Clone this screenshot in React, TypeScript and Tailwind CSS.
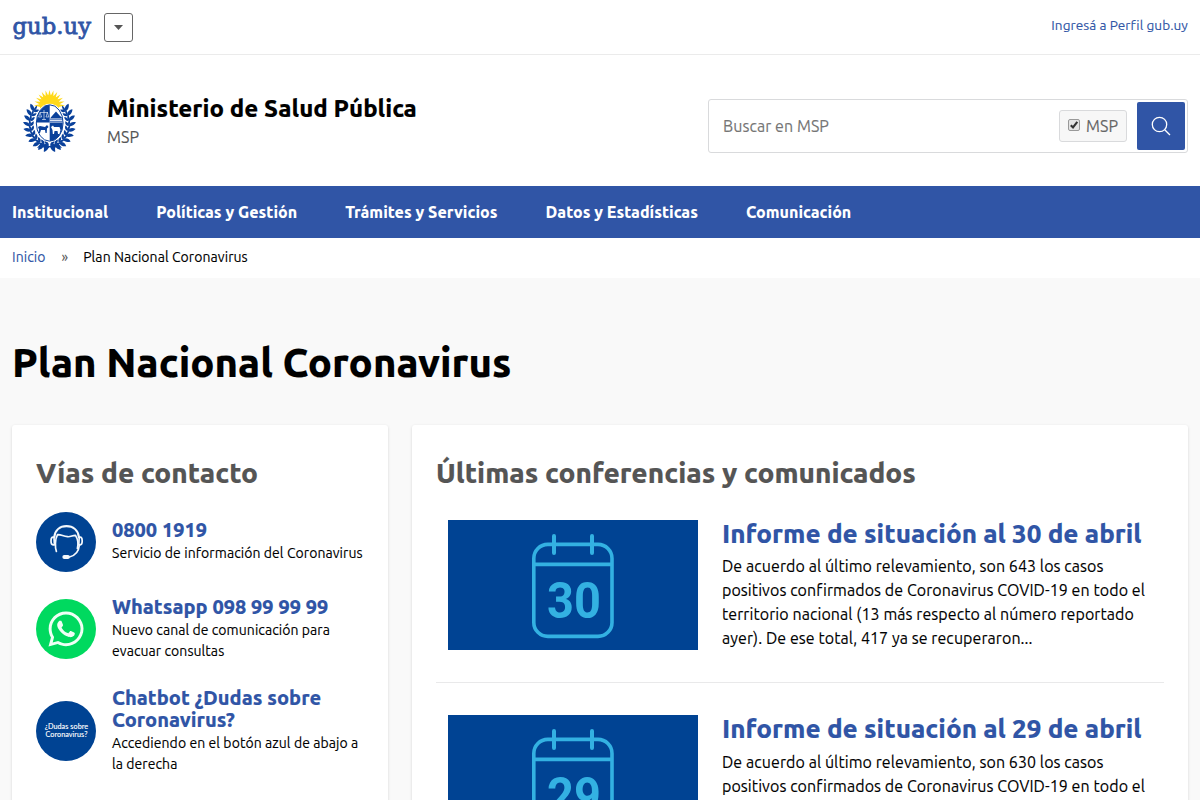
import type { ReactNode } from 'react';
import { FaWhatsapp } from 'react-icons/fa';

const navItems = ['Institucional', 'Políticas y Gestión', 'Trámites y Servicios', 'Datos y Estadísticas', 'Comunicación'];

function GubLogo() {
  return (
    <svg width="80" height="32" viewBox="0 0 80 32" aria-label="gub.uy">
      <text x="0.5" y="22.5" textLength="78.5" lengthAdjust="spacingAndGlyphs" fontFamily="'DejaVu Serif', serif" fontWeight="400" fontSize="22" fill="#3055a6" stroke="#3055a6" strokeWidth=".8">
        gub.uy
      </text>
    </svg>
  );
}

function Emblem() {
  const rays = Array.from({ length: 13 }, (_, i) => -180 + i * 15);
  const leaves = Array.from({ length: 10 }, (_, i) => -34 + i * 13.5);
  const leaf = 'M0 0C2 -2.8 5.4 -2.6 8 0C5.4 1.8 2 2 0 0Z';
  const side = leaves.map((a, i) => {
    const r = (a * Math.PI) / 180;
    const x = 19.5 * Math.cos(r);
    const y = 22 * Math.sin(r);
    return (
      <g key={i} transform={`translate(${x} ${y}) rotate(${a - 90})`}>
        <path d={leaf} transform="rotate(56)" />
        <path d={leaf} transform="rotate(-44) scale(.75)" />
        <path d={leaf} transform="scale(.85 .6)" />
      </g>
    );
  });
  return (
    <svg width="60" height="66" viewBox="0 0 60 66" aria-label="Escudo">
      <g fill="#ffd91a">
        <circle cx="29.5" cy="17" r="10" />
        {rays.map((a) => (
          <path key={a} d="M8 -1.8L15.5 0L8 1.8Z" transform={`translate(29.5 17.5) rotate(${a})`} />
        ))}
      </g>
      <g fill="#0a419b">
        <g transform="translate(29.5 35.5)">
          {side}
          <g transform="scale(-1 1)">{side}</g>
        </g>
      </g>
      <ellipse cx="29.7" cy="35" rx="14.6" ry="19.2" fill="#fff" />
      <clipPath id="shield">
        <ellipse cx="29.7" cy="35" rx="13" ry="18" />
      </clipPath>
      <g clipPath="url(#shield)">
        <path d="M16 16H29.7V34.5H16ZM29.7 34.5H44V54H29.7Z" fill="#0a419b" />
        <path d="M30 30.5L32 28L36 23.5L40 28L43 30.5Z" fill="#0a419b" />
        <path d="M30 31.7H43M30 33.6H43" stroke="#4f77bd" strokeWidth="1" />
        <path d="M24 22V31.5M19.5 24.5H28M20 24.5L18.6 29H21.6L20 24.5M27.4 24.5L26 29H28.8L27.4 24.5M22 31.5H26" stroke="#fff" strokeWidth=".6" fill="none" />
        <path d="M18 39L20 38L25 39L27 37L28.5 39L27 40.5L26.7 45H25.5L25 42L21 42L20 45H18.6L19 41.5Z" fill="#0a419b" />
        <path d="M31 39L33 37.5L34 39H39.5L40.5 42L39.5 46H38L37.5 43H34.5L34 46H32.8L32.5 42Z" fill="#fff" />
      </g>
      <ellipse cx="29.7" cy="35" rx="13.4" ry="18.2" fill="none" stroke="#0a419b" strokeWidth="1" />
      <path d="M21 55C25 59 34 59 38 55L42 60L36 58.5L34 62.5L30 59L25 62.5L23 58.5L17 60Z" fill="#0a419b" />
    </svg>
  );
}

function CalendarPicture({ day }: { day: string }) {
  return (
    <svg className="h-[130px] w-[250px] shrink-0 bg-[#004393]" viewBox="0 0 250 130" aria-label={day}>
      <g fill="none" stroke="#33b1e2" strokeWidth="3.6">
        <rect x="85.8" y="24.4" width="78.2" height="92" rx="14" />
        <path d="M86 44.4H164" />
        <path d="M106 16V33M144 16V33" strokeWidth="4" strokeLinecap="round" />
      </g>
      <text x="126" y="97.6" textAnchor="middle" textLength="54" lengthAdjust="spacingAndGlyphs" fontFamily="Roboto, sans-serif" fontWeight="700" fontSize="50" fill="#33b1e2">
        {day}
      </text>
    </svg>
  );
}

function Headset() {
  return (
    <svg width="60" height="60" viewBox="0 0 60 60" fill="none" stroke="#f4f8fc" strokeWidth="1.7" strokeLinecap="round" strokeLinejoin="round">
      <path d="M18.3 25C19 18 24 14.2 30.5 14.2S42 18 42.9 25" strokeWidth="2.2" />
      <path d="M18 25.2H17C15.6 25.2 15 26.5 15 29S15.6 32.8 17 32.8H18.4ZM43.2 25.2H44.2C45.6 25.2 46.2 26.5 46.2 29S45.6 32.8 44.2 32.8H42.8Z" />
      <path d="M20.4 39.4C18.9 35.5 19 27 21.5 22.6C25.5 22.3 27 24.5 31.5 24.7C35 25 36.5 23.2 39.5 23.4C41.8 27 42.2 33 41.4 36.5" />
      <path d="M43.4 33C42.8 39 39.5 43.6 33.4 45" />
      <rect x="27.2" y="43.8" width="5.8" height="2.4" rx="1.1" fill="#f4f8fc" />
    </svg>
  );
}

function Contact({ icon, title, children }: { icon: ReactNode; title: ReactNode; children: ReactNode }) {
  return (
    <li className="flex items-center gap-4 first:[&>div]:pb-[2px] last:mt-px">
      {icon}
      <div className="whitespace-nowrap">
        <h3 className="text-[20px] leading-[22px] font-extrabold tracking-normal text-[#3055a6]">{title}</h3>
        <p className="mt-[2px] text-[14px] leading-[21px]">{children}</p>
      </div>
    </li>
  );
}

function Report({ day, children }: { day: string; children: ReactNode }) {
  return (
    <li className="flex gap-6 border-b border-[#e9e9ea] pt-8 pb-8 pl-3 first:pt-0 [&:not(:first-child)_p]:mt-[7px]">
      <CalendarPicture day={day} />
      <div className="-mt-px whitespace-nowrap">
        <h3 className="text-[26px] leading-[29px] font-extrabold tracking-normal text-[#3055a6]">Informe de situación al {day} de abril</h3>
        <p className="mt-[6px] text-[16px] leading-6">{children}</p>
      </div>
    </li>
  );
}

export default function App() {
  return (
    <div className="h-[800px] w-[1200px] overflow-hidden bg-white font-[Ubuntu,'Noto_Sans',sans-serif] tracking-[.07px] text-black [-webkit-text-stroke:0.12px]">
      <div className="flex h-[55px] items-center justify-between border-b border-[#ebebeb] px-3">
        <div className="flex items-center gap-3">
          <GubLogo />
          <button className="flex h-[29px] w-[29px] items-center justify-center rounded-[3px] border border-[#666]">
            <svg width="9" height="5" viewBox="0 0 9 5"><path d="M0 0H9L4.5 5Z" fill="#555" /></svg>
          </button>
        </div>
        <a className="pb-[3px] text-[13.6px] text-[#3055a6]">Ingresá a Perfil gub.uy</a>
      </div>

      <header className="flex h-[131px] justify-between pr-3 pl-5">
        <div className="flex gap-[27px]">
          <div className="pt-[33px]"><Emblem /></div>
          <div className="pt-[39px] whitespace-nowrap">
            <h2 className="text-[24px] leading-[29px] font-extrabold tracking-normal">Ministerio de Salud Pública</h2>
            <p className="mt-[2px] text-[16px] leading-6 text-[#555]">MSP</p>
          </div>
        </div>
        <form className="mt-[44px] flex h-[54px] w-[480px] items-center rounded-[3px] border border-[#d9dadc] pr-[2px] pl-[14px]">
          <span className="flex-1 text-[16px] text-[#757575]">Buscar en MSP</span>
          <label className="mr-[10px] flex h-8 w-[68px] items-center gap-[6px] rounded-[3px] border border-[#d9dadc] bg-[#f7f7f7] pl-2 text-[16px] text-[#666]">
            <svg width="12" height="12" viewBox="0 0 12 12" className="mb-[2px] shrink-0">
              <rect x=".5" y=".5" width="11" height="11" rx="1.5" fill="#e4e4e4" stroke="#999" />
              <path d="M2.8 6.2L5 8.5L9.3 2.8" fill="none" stroke="#333" strokeWidth="2.1" />
            </svg>
            MSP
          </label>
          <button className="flex h-12 w-12 items-center justify-center rounded-[2px] bg-[#3055a6]">
            <svg width="20" height="20" viewBox="0 0 20 20" fill="none" stroke="#fff" strokeWidth="1.3">
              <circle cx="8.5" cy="8.5" r="7.2" />
              <path d="M13.7 13.7L19 19" />
            </svg>
          </button>
        </form>
      </header>

      <nav className="flex h-[52px] items-center gap-12 bg-[#3055a6] px-3 text-[16px] font-extrabold tracking-normal text-white [-webkit-text-stroke:0]">
        {navItems.map((item) => <a key={item}>{item}</a>)}
      </nav>

      <div className="flex h-10 items-center px-3 pb-[2px] text-[14px]">
        <a className="text-[#3055a6]">Inicio</a>
        <span className="mr-[15px] ml-4 text-[#555]">»</span>
        <span>Plan Nacional Coronavirus</span>
      </div>

      <main className="h-[600px] bg-[#f9f9f9] px-3 pt-[61px]">
        <h1 className="text-[40px] leading-[48px] font-extrabold tracking-normal">Plan Nacional Coronavirus</h1>
        <div className="mt-[38px] grid h-[450px] grid-cols-[376px_776px] gap-6">
          <section className="rounded-[3px] bg-white px-6 pt-8 shadow-[0_1px_3px_rgba(0,0,0,0.15)]">
            <h2 className="text-[28px] leading-8 font-extrabold tracking-normal text-[#555]">Vías de contacto</h2>
            <ul className="mt-[23px] flex flex-col gap-6">
              <Contact title="0800 1919" icon={<span className="h-[60px] w-[60px] shrink-0 rounded-full bg-[#004393]"><Headset /></span>}>
                Servicio de información del Coronavirus
              </Contact>
              <Contact title="Whatsapp 098 99 99 99" icon={<span className="flex h-[60px] w-[60px] shrink-0 items-center justify-center rounded-full bg-[#00d95f] text-[#effff5]"><FaWhatsapp size={40} /></span>}>
                Nuevo canal de comunicación para<br />evacuar consultas
              </Contact>
              <Contact
                title={<>Chatbot ¿Dudas sobre<br />Coronavirus?</>}
                icon={<span className="flex h-[60px] w-[60px] shrink-0 items-center justify-center rounded-full bg-[#004393] pl-px text-center font-[Lato] text-[7.2px] leading-[8px] whitespace-nowrap text-white">¿Dudas sobre<br />Coronavirus?</span>}
              >
                Accediendo en el botón azul de abajo a<br />la derecha
              </Contact>
            </ul>
          </section>
          <section className="rounded-[3px] bg-white px-6 pt-8 shadow-[0_1px_3px_rgba(0,0,0,0.15)]">
            <h2 className="text-[28px] leading-8 font-extrabold tracking-normal text-[#555]">Últimas conferencias y comunicados</h2>
            <ul className="mt-[31px]">
              <Report day="30">
                De acuerdo al último relevamiento, son 643 los casos<br />
                positivos confirmados de Coronavirus COVID-19 en todo el<br />
                territorio nacional (13 más respecto al número reportado<br />
                ayer). De ese total, 417 ya se recuperaron...
              </Report>
              <Report day="29">
                De acuerdo al último relevamiento, son 630 los casos<br />
                positivos confirmados de Coronavirus COVID-19 en todo el
              </Report>
            </ul>
          </section>
        </div>
      </main>
    </div>
  );
}
